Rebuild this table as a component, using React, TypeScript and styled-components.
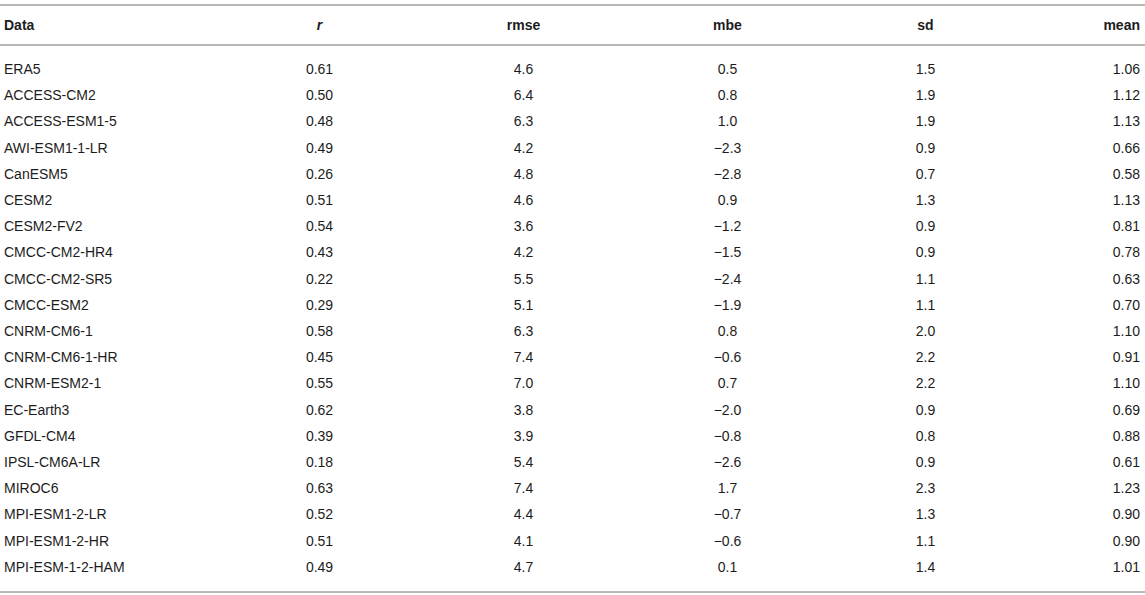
import React from 'react';
import styled, { createGlobalStyle } from 'styled-components';

const GlobalStyle = createGlobalStyle`
  body {
    margin: 0;
    background: #ffffff;
    font-family: 'Liberation Sans', Arial, sans-serif;
  }
`;

const Wrapper = styled.div`
  width: 1145px;
  padding-top: 4px;
`;

const Table = styled.table`
  width: 1145px;
  border-collapse: collapse;
  table-layout: fixed;
  font-size: 14px;
  color: #1c1c1c;
  border-top: 2px solid #b8b8b8;
  border-bottom: 2px solid #b8b8b8;
`;

const HeadCell = styled.th<{ $align?: string }>`
  font-weight: bold;
  text-align: ${(p) => p.$align || 'center'};
  padding: 10px 5px 10px 4px;
  line-height: 18px;
  border-bottom: 2px solid #b8b8b8;
`;

const Italic = styled.i`
  font-style: italic;
`;

const Row = styled.tr`
  &:first-child td {
    padding-top: 14px;
  }
  &:last-child td {
    padding-bottom: 15px;
  }
`;

const Cell = styled.td<{ $align?: string }>`
  text-align: ${(p) => p.$align || 'center'};
  padding: 4px 5px 4px 4px;
  line-height: 18.2px;
  white-space: nowrap;
`;

const rows: string[][] = [
  ['ERA5', '0.61', '4.6', '0.5', '1.5', '1.06'],
  ['ACCESS-CM2', '0.50', '6.4', '0.8', '1.9', '1.12'],
  ['ACCESS-ESM1-5', '0.48', '6.3', '1.0', '1.9', '1.13'],
  ['AWI-ESM1-1-LR', '0.49', '4.2', '\u22122.3', '0.9', '0.66'],
  ['CanESM5', '0.26', '4.8', '\u22122.8', '0.7', '0.58'],
  ['CESM2', '0.51', '4.6', '0.9', '1.3', '1.13'],
  ['CESM2-FV2', '0.54', '3.6', '\u22121.2', '0.9', '0.81'],
  ['CMCC-CM2-HR4', '0.43', '4.2', '\u22121.5', '0.9', '0.78'],
  ['CMCC-CM2-SR5', '0.22', '5.5', '\u22122.4', '1.1', '0.63'],
  ['CMCC-ESM2', '0.29', '5.1', '\u22121.9', '1.1', '0.70'],
  ['CNRM-CM6-1', '0.58', '6.3', '0.8', '2.0', '1.10'],
  ['CNRM-CM6-1-HR', '0.45', '7.4', '\u22120.6', '2.2', '0.91'],
  ['CNRM-ESM2-1', '0.55', '7.0', '0.7', '2.2', '1.10'],
  ['EC-Earth3', '0.62', '3.8', '\u22122.0', '0.9', '0.69'],
  ['GFDL-CM4', '0.39', '3.9', '\u22120.8', '0.8', '0.88'],
  ['IPSL-CM6A-LR', '0.18', '5.4', '\u22122.6', '0.9', '0.61'],
  ['MIROC6', '0.63', '7.4', '1.7', '2.3', '1.23'],
  ['MPI-ESM1-2-LR', '0.52', '4.4', '\u22120.7', '1.3', '0.90'],
  ['MPI-ESM1-2-HR', '0.51', '4.1', '\u22120.6', '1.1', '0.90'],
  ['MPI-ESM-1-2-HAM', '0.49', '4.7', '0.1', '1.4', '1.01'],
];

const widths = [220, 200, 208, 200, 196, 121];

const aligns = (i: number) => (i === 0 ? 'left' : i === 5 ? 'right' : 'center');

export default function App() {
  return (
    <Wrapper>
      <GlobalStyle />
      <Table>
        <colgroup>
          {widths.map((w, i) => (
            <col key={i} style={{ width: w }} />
          ))}
        </colgroup>
        <thead>
          <tr>
            <HeadCell $align="left">Data</HeadCell>
            <HeadCell>
              <Italic>r</Italic>
            </HeadCell>
            <HeadCell>rmse</HeadCell>
            <HeadCell>mbe</HeadCell>
            <HeadCell>sd</HeadCell>
            <HeadCell $align="right">mean</HeadCell>
          </tr>
        </thead>
        <tbody>
          {rows.map((r) => (
            <Row key={r[0]}>
              {r.map((v, i) => (
                <Cell key={i} $align={aligns(i)}>
                  {v}
                </Cell>
              ))}
            </Row>
          ))}
        </tbody>
      </Table>
    </Wrapper>
  );
}
